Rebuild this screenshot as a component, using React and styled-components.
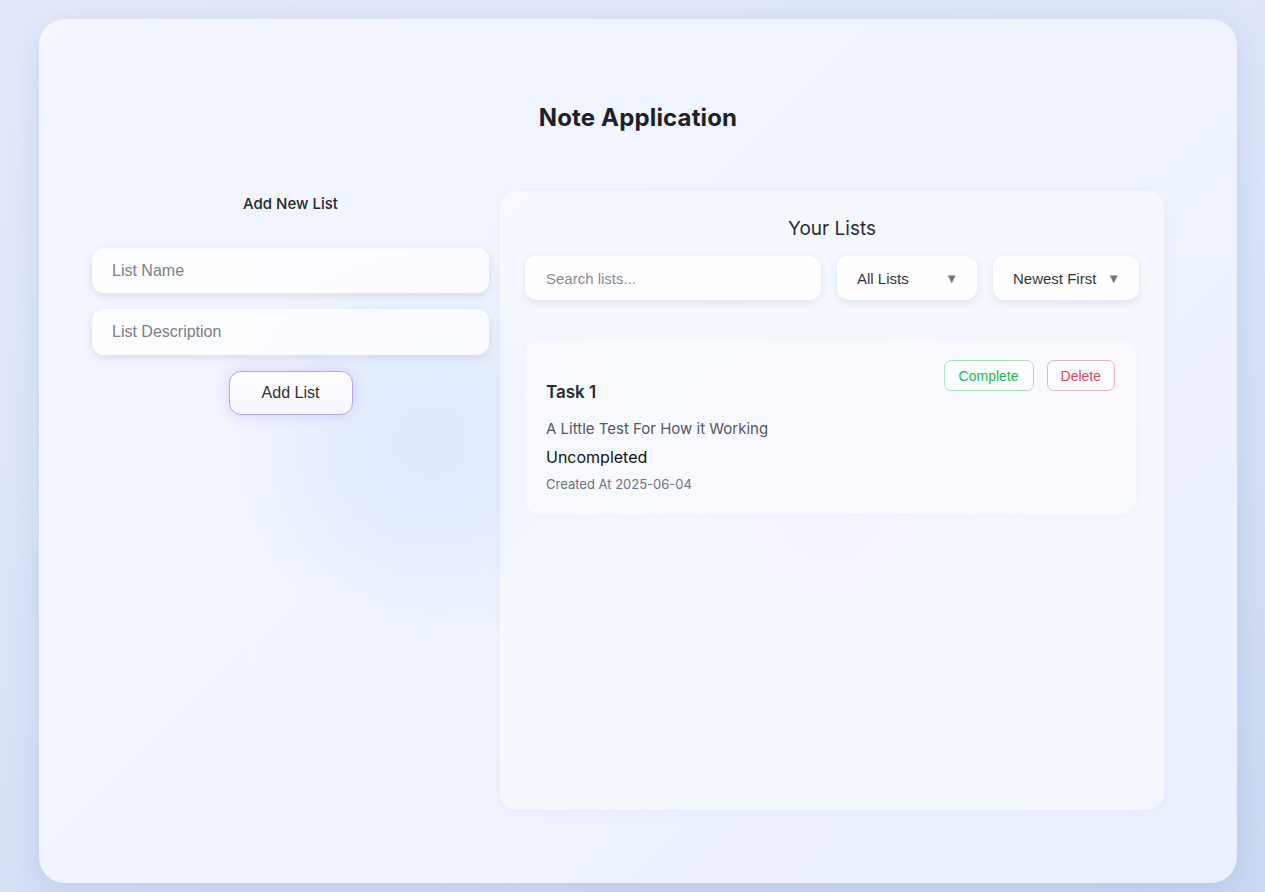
import React from "react";
import styled, { createGlobalStyle } from "styled-components";

const Global = createGlobalStyle`
  html, body { margin: 0; padding: 0; }
  body {
    min-height: 892px;
    background: linear-gradient(160deg, #e4e9f9 0%, #dae3f7 50%, #ccd8f0 100%);
    font-family: "Liberation Sans", Arial, sans-serif;
  }
  * { box-sizing: border-box; }
`;

const Page = styled.div`
  padding: 19px 28px 9px 39px;
`;

const Container = styled.main`
  width: 1198px;
  height: 864px;
  border-radius: 26px;
  padding: 84px 0 0 53px;
  background:
    radial-gradient(circle at 391px 421px, rgba(214, 228, 252, 0.75) 0, rgba(218, 231, 252, 0.5) 90px, rgba(225, 234, 252, 0) 200px),
    radial-gradient(circle at 791px 491px, rgba(242, 232, 248, 0.8) 0, rgba(240, 236, 250, 0.4) 100px, rgba(240, 240, 252, 0) 190px),
    linear-gradient(135deg, #f3f6ff 0%, #eef3fe 55%, #eaf0fd 100%);
  box-shadow: 0 8px 30px rgba(110, 140, 210, 0.22);
`;

const Title = styled.h1`
  margin: 0 0 59px;
  width: 1092px;
  text-align: center;
  font-family: "Inter", "Noto Sans", sans-serif;
  font-weight: 700;
  font-size: 24px;
  line-height: 29px;
  color: #1f2127;
  letter-spacing: 0.15px;
`;

const Columns = styled.div`
  display: grid;
  grid-template-columns: 397px 664px;
  column-gap: 11px;
  align-items: start;
`;

const LeftCol = styled.section`
  display: flex;
  flex-direction: column;
  align-items: center;
`;

const SubTitle = styled.h2`
  margin: 2px 0 33px;
  font-family: "Inter", "Noto Sans", sans-serif;
  font-weight: 500;
  font-size: 15px;
  line-height: 22px;
  color: #25272c;
`;

const Field = styled.input`
  width: 100%;
  height: ${(p) => p.$h || 45}px;
  margin-bottom: 16px;
  border: none;
  outline: none;
  border-radius: 12px;
  padding: 0 20px;
  background: rgba(255, 255, 255, 0.75);
  box-shadow: 0 3px 8px rgba(60, 80, 130, 0.13);
  font-family: "Liberation Sans", Arial, sans-serif;
  font-size: 16px;
  color: #333;
  &::placeholder { color: #7e7f86; }
`;

const AddButton = styled.button`
  width: 124px;
  height: 44px;
  border-radius: 12px;
  border: 1px solid #b7a5e6;
  background: linear-gradient(180deg, #ffffff 0%, #f6f4fd 100%);
  box-shadow: 0 0 14px rgba(165, 140, 235, 0.32);
  font-family: "Liberation Sans", Arial, sans-serif;
  font-size: 16px;
  color: #2e3036;
`;

const Panel = styled.section`
  height: 619px;
  border-radius: 16px;
  padding: 26px 25px 25px;
  background: rgba(250, 251, 255, 0.55);
  box-shadow: 0 2px 10px rgba(140, 160, 210, 0.08);
`;

const PanelTitle = styled.h2`
  margin: 0 0 15px;
  text-align: center;
  font-family: "Inter", "Noto Sans", sans-serif;
  font-weight: 400;
  font-size: 19px;
  line-height: 24px;
  color: #2b2d33;
`;

const Controls = styled.div`
  display: flex;
  gap: 16px;
  margin-bottom: 40px;
`;

const Search = styled.input`
  flex: 1;
  height: 44px;
  border: none;
  outline: none;
  border-radius: 12px;
  padding: 0 21px;
  background: rgba(255, 255, 255, 0.85);
  box-shadow: 0 3px 8px rgba(60, 80, 130, 0.12);
  font-family: "Liberation Sans", Arial, sans-serif;
  font-size: 15px;
  &::placeholder { color: #8a8b91; }
`;

const Select = styled.div`
  width: ${(p) => p.$w}px;
  height: 44px;
  border-radius: 12px;
  padding: 0 ${(p) => p.$pr}px 0 20px;
  display: flex;
  align-items: center;
  justify-content: space-between;
  background: rgba(255, 255, 255, 0.85);
  box-shadow: 0 3px 8px rgba(60, 80, 130, 0.12);
  font-family: "Liberation Sans", Arial, sans-serif;
  font-size: 15px;
  color: #35373c;
`;

const Arrow = styled.span`
  font-size: 13px;
  color: #75777d;
`;

const Card = styled.article`
  width: 611px;
  border-radius: 14px;
  padding: 20px 21px 21px;
  background: rgba(250, 251, 255, 0.55);
  box-shadow: 0 1px 6px rgba(140, 160, 210, 0.06);
`;

const CardHead = styled.div`
  display: flex;
  justify-content: space-between;
  align-items: flex-start;
  margin-bottom: 15px;
`;

const TaskTitle = styled.h3`
  margin: 20px 0 0;
  font-family: "Inter", "Noto Sans", sans-serif;
  font-weight: 600;
  font-size: 17px;
  line-height: 24px;
  color: #2a2c33;
`;

const Actions = styled.div`
  display: flex;
  gap: 13px;
`;

const ActionButton = styled.button`
  height: 31px;
  padding: 0 ${(p) => p.$px}px;
  border-radius: 7px;
  background: rgba(255, 255, 255, 0.6);
  border: 1px solid ${(p) => p.$border};
  color: ${(p) => p.$color};
  font-family: "Liberation Sans", Arial, sans-serif;
  font-size: 14px;
`;

const Desc = styled.p`
  margin: 0 0 8px;
  font-family: "Inter", "Noto Sans", sans-serif;
  font-size: 15px;
  line-height: 20px;
  color: #545861;
`;

const Status = styled.p`
  margin: 0 0 8px;
  font-family: "Inter", "Noto Sans", sans-serif;
  font-size: 16px;
  line-height: 20px;
  color: #121317;
`;

const Meta = styled.p`
  margin: 0;
  font-family: "Inter", "Noto Sans", sans-serif;
  font-size: 13px;
  line-height: 18px;
  color: #6f737c;
`;

export default function App() {
  return (
    <>
      <Global />
      <Page>
        <Container>
          <Title>Note Application</Title>
          <Columns>
            <LeftCol>
              <SubTitle>Add New List</SubTitle>
              <Field placeholder="List Name" $h={45} />
              <Field placeholder="List Description" $h={46} />
              <AddButton>Add List</AddButton>
            </LeftCol>
            <Panel>
              <PanelTitle>Your Lists</PanelTitle>
              <Controls>
                <Search placeholder="Search lists..." />
                <Select $w={140} $pr={19}>
                  All Lists <Arrow>▼</Arrow>
                </Select>
                <Select $w={146} $pr={19}>
                  Newest First <Arrow>▼</Arrow>
                </Select>
              </Controls>
              <Card>
                <CardHead>
                  <TaskTitle>Task 1</TaskTitle>
                  <Actions>
                    <ActionButton $px={14} $border="#a9e2b8" $color="#22b84a">Complete</ActionButton>
                    <ActionButton $px={13} $border="#eab3bc" $color="#dc4a57">Delete</ActionButton>
                  </Actions>
                </CardHead>
                <Desc>A Little Test For How it Working</Desc>
                <Status>Uncompleted</Status>
                <Meta>Created At 2025-06-04</Meta>
              </Card>
            </Panel>
          </Columns>
        </Container>
      </Page>
    </>
  );
}
